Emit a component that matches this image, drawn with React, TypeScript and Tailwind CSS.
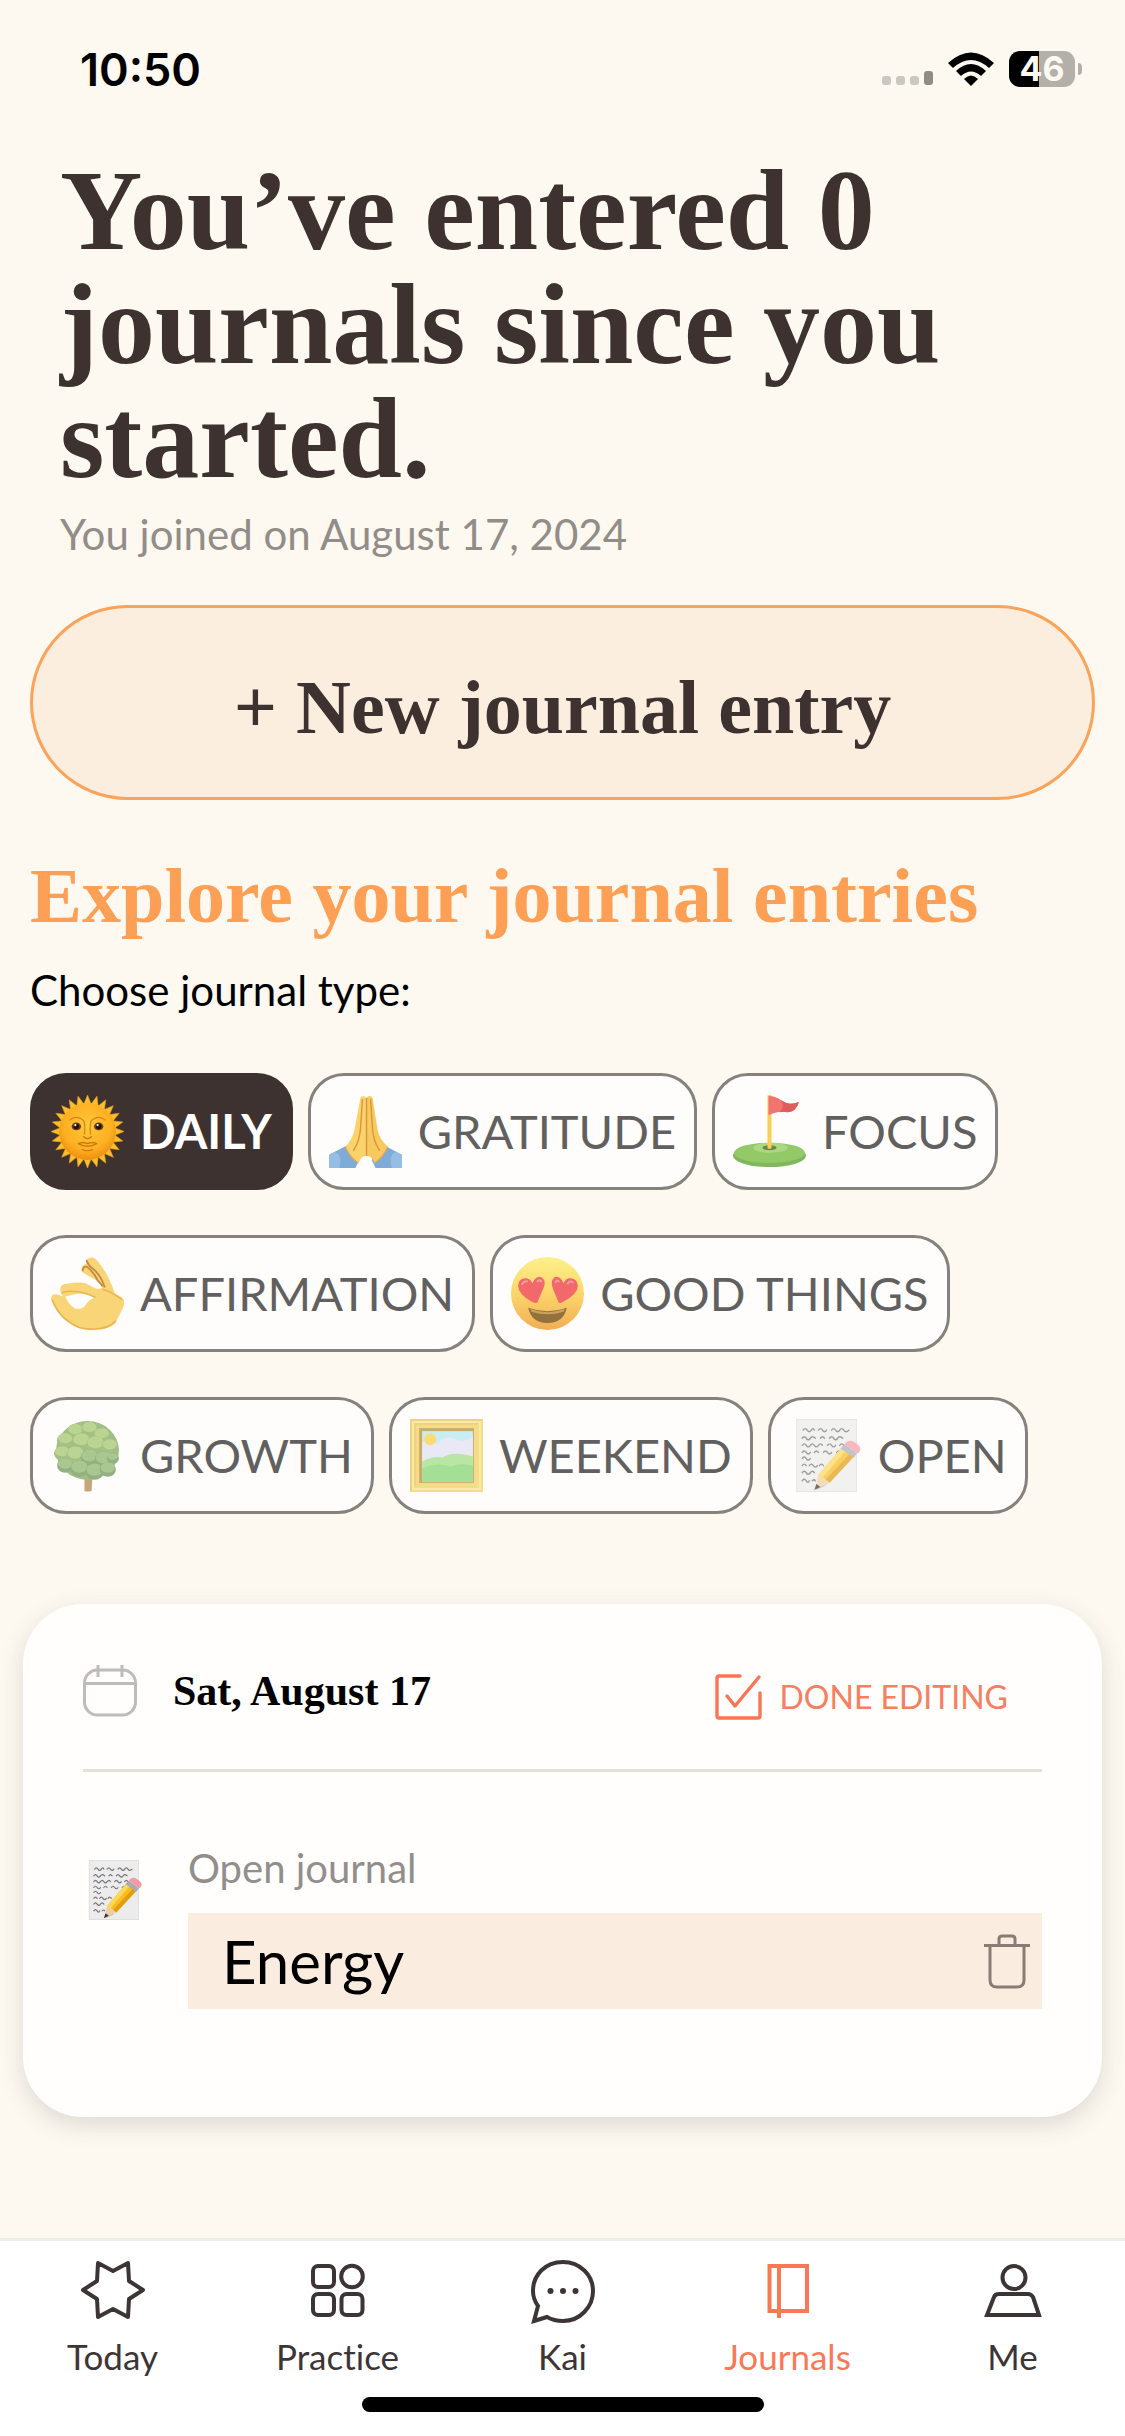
import React from "react";

const SERIF = "font-['Liberation_Serif',serif]";
const SANS = "font-['Lato',sans-serif]";

type IconProps = { className?: string };

function Sun({ className }: IconProps) {
  return (
    <svg viewBox="0 0 72 72" className={className} aria-hidden="true">
      <defs>
        <radialGradient id="sunFace" cx="0.5" cy="0.4" r="0.6">
          <stop offset="0" stopColor="#ffc83a" />
          <stop offset="0.7" stopColor="#fdb022" />
          <stop offset="1" stopColor="#ee8d10" />
        </radialGradient>
      </defs>
      {Array.from({ length: 24 }, (_, i) => (
        <path key={i} d="M32 10 L36 0 L40 10Z" fill="#fcc02c" stroke="#e79a1c" strokeWidth="0.6" transform={`rotate(${i * 15} 36 36)`} />
      ))}
      <circle cx="36" cy="36" r="28" fill="url(#sunFace)" />
      <path d="M18 25 Q25 19 32 25 Q34 28 33 39 M54 25 Q47 19 40 25 Q38 28 39 39" fill="none" stroke="#d98412" strokeWidth="1.2" />
      <ellipse cx="25" cy="31" rx="4.6" ry="3.8" fill="#6b3a18" />
      <ellipse cx="47" cy="31" rx="4.6" ry="3.8" fill="#6b3a18" />
      <circle cx="25" cy="31" r="2.6" fill="#221210" />
      <circle cx="47" cy="31" r="2.6" fill="#221210" />
      <circle cx="24" cy="29.6" r="1.1" fill="#fff" />
      <circle cx="46" cy="29.6" r="1.1" fill="#fff" />
      <path d="M32 41 Q36 45 40 41 M27 48 Q36 53 45 48 M27 48 Q31 46 36 48 Q41 46 45 48 M31 54 Q36 56 41 54" fill="none" stroke="#c9700f" strokeWidth="1.2" strokeLinecap="round" />
    </svg>
  );
}

function Hands({ className }: IconProps) {
  return (
    <svg viewBox="0 0 72 72" className={className} aria-hidden="true">
      <path d="M0 59 L17 50 L30 64 L26 72 H0Z" fill="#7fabd9" />
      <path d="M72 59 L55 50 L42 64 L46 72 H72Z" fill="#7fabd9" />
      <path d="M0 59 L6 56 Q14 60 10 72 H0Z M72 59 L66 56 Q58 60 62 72 H72Z" fill="#96bde4" />
      <path d="M37 3 V60 Q32 60 29 67 Q21 62 16 51 Q23 44 25 35 L31 3 Q34 -1 37 3Z" fill="#fbd36d" />
      <path d="M37 3 V60 Q42 60 45 67 Q53 62 58 51 Q50 44 48 35 L43 3 Q40 -1 37 3Z" fill="#f8c95f" />
      <path d="M37 3 V60 M33 4 L31 34 Q30 46 24 55 M41 4 L43 34 Q44 46 50 55" fill="none" stroke="#d9963c" strokeWidth="1.4" />
      <path d="M16 51 Q21 62 29 67 M58 51 Q53 62 45 67" fill="none" stroke="#e0a850" strokeWidth="1.2" />
    </svg>
  );
}

function Golf({ className }: IconProps) {
  return (
    <svg viewBox="0 0 72 72" className={className} aria-hidden="true">
      <ellipse cx="36" cy="60" rx="36" ry="11" fill="#7fb85c" />
      <ellipse cx="36" cy="57" rx="35" ry="10" fill="#94c968" />
      <ellipse cx="37" cy="52" rx="17" ry="5" fill="#add883" />
      <ellipse cx="36" cy="52" rx="7" ry="2.4" fill="#6b8748" />
      <rect x="34" y="0" width="4" height="53" rx="1" fill="#f9cf5c" />
      <path d="M35 1 Q42 1 47 5 Q56 11 65 7 Q62 17 54 17 Q44 15 35 20Z" fill="#f27470" />
      <path d="M47 5 Q54 11 65 7 Q62 17 54 17 Q50 16 46 17 Q52 11 47 5Z" fill="#e05b5d" />
    </svg>
  );
}

function OkHand({ className }: IconProps) {
  return (
    <svg viewBox="0 0 72 72" className={className} aria-hidden="true">
      <path
        fillRule="evenodd"
        d="M35 3 Q39 -2 44 2 Q50 8 56 19 Q60 27 63 36 L70 40 Q74 44 71 50 L64 64 Q58 72 40 72 Q25 72 15 63 Q4 54 0 41 Q1 36 6 37 L12 39 L10 36 Q7 29 13 27 Q26 24 34 26 L44 31 Q50 32 51 29 L46 24 L31 15 Q28 8 35 7Z M14 39 Q18 48 24 51 Q32 52 35 46 Q39 41 44 40 Q36 36 27 36 Q19 38 14 39Z"
        fill="#fad577"
      />
      <path d="M31 14 Q32 8 36 10 Q43 16 46 23 L51 29 M35 3 Q36 8 43 13 Q50 20 53 30" fill="none" stroke="#c08b45" strokeWidth="1.8" />
      <path d="M1 42 Q7 57 18 64 Q28 72 42 71 Q57 71 64 63 M11 35 Q26 31 44 40 M51 32 Q60 34 70 42" fill="none" stroke="#e9b553" strokeWidth="1.6" />
    </svg>
  );
}

function HeartEyes({ className }: IconProps) {
  return (
    <svg viewBox="0 0 72 72" className={className} aria-hidden="true">
      <defs>
        <linearGradient id="loveFace" x1="0" y1="0" x2="0" y2="1">
          <stop offset="0" stopColor="#fdf08a" />
          <stop offset="0.5" stopColor="#fbd66b" />
          <stop offset="1" stopColor="#f1ad55" />
        </linearGradient>
      </defs>
      <circle cx="36" cy="36" r="36" fill="url(#loveFace)" />
      <path d="M17 50 Q36 57 55 50 Q52 65 36 65 Q20 65 17 50Z" fill="#94703c" />
      <path d="M19 51 Q36 58 53 51 L52 54 Q36 59 20 54Z" fill="#c7a35e" />
      <path d="M20 44 Q7 36 7 28 Q8 21 14 21 Q19 21 21 26 Q25 18 30 20 Q36 24 31 33 Q28 40 26 45 Q24 46 20 44Z" fill="#f2686b" />
      <path d="M52 44 Q66 36 66 28 Q65 21 58 21 Q54 21 52 26 Q48 18 43 20 Q38 24 42 33 Q45 40 47 45 Q49 46 52 44Z" fill="#f2686b" />
      <path d="M11 27 Q12 24 16 24 M26 24 Q28 22 30 24 M44 25 Q45 22 47 24 M56 26 Q58 23 61 25" fill="none" stroke="#fb9a96" strokeWidth="2" strokeLinecap="round" />
    </svg>
  );
}

const LEAVES = [
  [24, 10, 8], [38, 8, 8], [50, 14, 8], [14, 19, 8], [30, 20, 9], [44, 23, 9], [58, 25, 8], [11, 32, 8],
  [24, 33, 9], [38, 36, 9], [52, 38, 9], [61, 37, 6], [14, 44, 8], [28, 47, 9], [43, 50, 9], [56, 48, 8],
];

function Tree({ className }: IconProps) {
  return (
    <svg viewBox="0 0 72 72" className={className} aria-hidden="true">
      <path d="M33 54 H41 L40 71 Q36 72 33 71Z" fill="#c5a67a" />
      <ellipse cx="36" cy="31" rx="31" ry="29" fill="#a1be87" />
      {LEAVES.map(([x, y, r], i) => (
        <g key={i}>
          <ellipse cx={x} cy={y + 2} rx={r} ry={r - 1} fill={y > 35 ? "#93b080" : "#a3c183"} />
          <ellipse cx={x} cy={y} rx={r - 1} ry={r - 3} fill={y > 35 ? "#a9c791" : "#bbd492"} />
        </g>
      ))}
    </svg>
  );
}

function Frame({ className }: IconProps) {
  return (
    <svg viewBox="0 0 72 72" className={className} aria-hidden="true">
      <rect width="72" height="72" fill="#f4dc88" />
      <path d="M0 0 H72 L66 6 H6Z M0 0 L6 6 V66 L0 72Z" fill="#eed27c" />
      <rect x="3" y="3" width="66" height="66" fill="none" stroke="#f9eaa9" strokeWidth="2" />
      <rect x="9" y="9" width="54" height="54" fill="#c9ab6c" />
      <rect x="12" y="12" width="50" height="50" fill="#c9edf5" />
      <path d="M12 23 Q20 17 27 25 Q35 14 44 20 Q53 24 62 17 V44 H12Z" fill="#e8e9f4" />
      <circle cx="20" cy="20" r="6" fill="#fbdb75" />
      <path d="M12 42 Q22 36 32 38 Q42 31 62 37 V62 H12Z" fill="#b9e6a4" />
      <path d="M12 49 Q28 42 40 47 Q50 43 62 46 V62 H12Z" fill="#a4df96" />
    </svg>
  );
}

function Memo({ className }: IconProps) {
  return (
    <svg viewBox="-3 0 72 72" className={className} aria-hidden="true">
      <rect x="4" y="0" width="60" height="72" fill="#dedddd" />
      <rect x="5" y="1" width="58" height="70" fill="#ececec" />
      <path
        d="M11 11 q2 -3 4 0 t4 0 t3 0 M26 11 q2 -3 4 0 t4 0 M39 11 q2 -3 4 0 t4 0 t4 0 t5 0 M10 19 q2 -3 4 0 t4 0 t5 0 M28 19 q2 -3 4 0 M37 19 q2 -3 4 0 t4 0 t5 0 M10 26 q2 -3 4 0 t4 0 t4 0 t4 0 t4 0 M35 26 q2 -3 4 0 t4 0 M47 26 q2 -3 4 0 M10 33 q2 -3 4 0 t4 0 M22 33 q2 -3 4 0 M31 33 q2 -3 4 0 t4 0 M44 33 q2 -3 4 0 M10 39 q2 -3 4 0 t4 0 M10 46 q2 -3 4 0 M17 46 q2 -3 4 0 t4 0 M27 46 q2 -3 4 0 M10 53 q2 -3 4 0 t4 0 t4 0 M10 61 q2 -3 4 0 t3 0 M20 61 q2 -2 3 0"
        fill="none"
        stroke="#77757a"
        strokeWidth="1.4"
        strokeLinecap="round"
      />
      <path d="M24 70 L26 56 L34 65Z" fill="#7d7060" opacity="0.4" />
      <path d="M26 55 L50 27 L62 36 L37 63Z" fill="#f8bd1f" />
      <path d="M26 55 L50 27 L54 30 L30 58Z" fill="#fdd75a" />
      <path d="M33 60 L58 33 L62 36 L37 63Z" fill="#e29d12" />
      <path d="M26 55 L37 63 L23 69Z" fill="#efcf9d" />
      <path d="M24 64 L28 67 L22 70Z" fill="#3b3434" />
      <path d="M48 29 L52 25 L64 34 L61 38Z" fill="#a8acb8" />
      <path d="M52 25 Q55 20 60 22 Q69 27 67 31 Q66 34 64 34Z" fill="#f39aa7" />
    </svg>
  );
}

const ENTRY_TYPES = [
  [
    { label: "DAILY", Icon: Sun, tone: "opacity-100", active: true },
    { label: "GRATITUDE", Icon: Hands, tone: "opacity-100" },
    { label: "FOCUS", Icon: Golf, tone: "opacity-100" },
  ],
  [
    { label: "AFFIRMATION", Icon: OkHand, tone: "opacity-100" },
    { label: "GOOD THINGS", Icon: HeartEyes, tone: "opacity-100" },
  ],
  [
    { label: "GROWTH", Icon: Tree, tone: "opacity-100" },
    { label: "WEEKEND", Icon: Frame, tone: "opacity-100" },
    { label: "OPEN", Icon: Memo, tone: "opacity-70" },
  ],
];

function StatusBar() {
  return (
    <header className="flex h-[138px] items-center justify-between pr-[43px] pl-20">
      <time className="font-['Inter',sans-serif] text-[45px] leading-none font-semibold text-black">10:50</time>
      <div className="flex items-center gap-[15px]">
        <svg viewBox="0 0 51 34" className="h-[34px] w-[51px]" aria-label="Signal">
          <rect x="0" y="24" width="9" height="9" rx="3" fill="#cbc8c1" />
          <rect x="14" y="24" width="9" height="9" rx="3" fill="#cbc8c1" />
          <rect x="28" y="24" width="9" height="9" rx="3" fill="#cbc8c1" />
          <rect x="42" y="19" width="9" height="14" rx="3" fill="#908d88" />
        </svg>
        <svg viewBox="0 0 46 34" className="h-[34px] w-[46px]" aria-label="Wi-Fi">
          <path d="M0 11 Q23 -10 46 11 L41 16 Q23 0 5 16Z" />
          <path d="M8 19 Q23 5 38 19 L33 24 Q23 15 13 24Z" />
          <path d="M16 27 Q23 20 30 27 L23 34Z" />
        </svg>
        <div className="flex items-center gap-[3px]">
          <div className="flex h-9 w-[66px] items-center justify-center rounded-[11px] bg-linear-to-r from-black from-45% to-[#b3b0aa] to-45% font-['Inter',sans-serif] text-[34px] leading-none font-bold text-[#fdf9f1]">
            46
          </div>
          <div className="h-3 w-1 rounded-r-full bg-[#b3b0aa]" />
        </div>
      </div>
    </header>
  );
}

function JournalTypes() {
  return (
    <div className="mt-[53px] flex flex-col gap-[45px] px-[30px]">
      {ENTRY_TYPES.map((row, i) => (
        <div key={i} className="flex gap-[15px]">
          {row.map(({ label, Icon, tone, active }) => (
            <button
              key={label}
              type="button"
              aria-pressed={!!active}
              className={
                "flex h-[117px] items-center gap-4 rounded-[36px] border-3 px-[18px] text-[47px] leading-none " +
                (active ? "border-[#3d3230] bg-[#3d3230] font-bold text-white" : "border-[#86817d] bg-[#fefdfb] text-[#62605f]")
              }
            >
              <Icon className={"size-[73px] shrink-0 " + tone} />
              <span className="whitespace-nowrap">{label}</span>
            </button>
          ))}
        </div>
      ))}
    </div>
  );
}

function EntryCard() {
  return (
    <section className="mx-[23px] mt-[90px] rounded-[60px] bg-[#fffefc] px-[60px] pb-[108px] shadow-[0_8px_24px_rgba(61,50,48,0.16)]">
      <div className="flex h-[168px] items-center justify-between border-b-3 border-[#e3e2d9] pt-2 pr-[34px]">
        <div className="flex items-center gap-9">
          <svg viewBox="0 0 54 52" className="h-[52px] w-[54px]" fill="none" stroke="#bfbbb7" strokeWidth="3" aria-hidden="true">
            <rect x="1.5" y="5" width="51" height="45" rx="13" />
            <path d="M2 18.5 H52 M15 0 V12 M39 0 V12" />
          </svg>
          <h3 className={SERIF + " text-[42px] leading-none font-bold text-black"}>Sat, August 17</h3>
        </div>
        <button type="button" className="mt-3 flex items-center gap-[18px] text-[32px] leading-none text-[#f5805f]">
          <svg viewBox="0 0 47 46" className="h-[46px] w-[47px]" fill="none" stroke="#fb7554" strokeWidth="3.4" aria-hidden="true">
            <path d="M25 2 H4 Q2 2 2 4 V42 Q2 44 4 44 H43 Q45 44 45 42 V19" strokeLinecap="round" />
            <path d="M12 22 L20 32 L44 3" strokeLinecap="round" strokeLinejoin="round" />
          </svg>
          DONE EDITING
        </button>
      </div>
      <div className="flex pt-[68px]">
        <Memo className="mt-5 size-[60px] shrink-0" />
        <div className="ml-[45px] min-w-0 flex-1">
          <label htmlFor="entry" className="mb-4 block text-[40px] leading-[57px] text-[#918e8c]">
            Open journal
          </label>
          <div className="flex h-24 items-center justify-between bg-[#faeddf] pr-3 pl-[34px]">
            <input id="entry" defaultValue="Energy" className="h-24 min-w-0 flex-1 bg-transparent text-[60px] leading-none text-black outline-none" />
            <button type="button" aria-label="Delete entry">
              <svg viewBox="0 0 46 55" className="h-[55px] w-[46px]" fill="none" stroke="#8b7b74" strokeWidth="3" aria-hidden="true">
                <path d="M0 11.5 H46 M15 11 V5 Q15 2 18 2 H28 Q31 2 31 5 V11 M6 12 V46 Q6 53 13 53 H33 Q40 53 40 46 V12" />
              </svg>
            </button>
          </div>
        </div>
      </div>
    </section>
  );
}

const TABS = [
  {
    label: "Today",
    icon: <path d="M18 3 L33 11 L48 3 L49 21 L63 30 L49 39 L48 57 L33 49 L18 57 L17 39 L3 30 L17 21Z" strokeLinejoin="round" />,
  },
  {
    label: "Practice",
    icon: (
      <>
        <rect x="8" y="6" width="21" height="21" rx="5" />
        <circle cx="47" cy="16.5" r="10.8" />
        <rect x="8" y="34" width="21" height="21" rx="5" />
        <rect x="36.5" y="34" width="21" height="21" rx="5" />
      </>
    ),
  },
  {
    label: "Kai",
    icon: (
      <>
        <path d="M4 61 L17 57 Q24 61 33 61 C50 61 63 47 63 31 C63 15 50 2 33 2 C15 2 3 15 3 31 Q3 39 8 46Z" />
        <g fill="currentColor" stroke="none">
          <circle cx="20.5" cy="31" r="3" />
          <circle cx="33" cy="31" r="3" />
          <circle cx="45.5" cy="31" r="3" />
        </g>
      </>
    ),
  },
  { label: "Journals", icon: <path d="M14.5 6 H52 V51 H14.5Z M24 6 V58" />, active: true },
  {
    label: "Me",
    icon: (
      <>
        <circle cx="34" cy="17.5" r="11.5" />
        <path d="M7 55 L14 37 Q15 34 19 34 H48 Q51 34 53 37 L59 55Z" />
      </>
    ),
  },
];

function TabBar() {
  return (
    <footer className="mt-auto border-t-3 border-[#eeedea] bg-white pb-6">
      <nav className="grid grid-cols-5 pt-[19px]">
        {TABS.map(({ label, icon, active }) => (
          <a
            key={label}
            href="#"
            aria-current={active ? "page" : undefined}
            className={
              "flex flex-col items-center gap-2 text-[35px] leading-[48px] [font-variant-ligatures:none] " +
              (active ? "text-[#fb7857]" : "text-[#3d3535]")
            }
          >
            <svg viewBox="0 0 66 64" className="h-16 w-[66px]" fill="none" stroke="currentColor" strokeWidth="4" aria-hidden="true">
              {icon}
            </svg>
            {label}
          </a>
        ))}
      </nav>
      <div className="mx-auto mt-[17px] h-[15px] w-[402px] rounded-full bg-black" />
    </footer>
  );
}

export default function App() {
  return (
    <div className={SANS + " flex min-h-screen flex-col bg-[#fdf9f1]"}>
      <StatusBar />
      <main>
        <div className="px-[60px] pt-4">
          <h1 className={SERIF + " text-[114px] leading-[114px] font-bold text-[#3d3230]"}>You’ve entered 0 journals since you started.</h1>
          <p className="mt-1 text-[42px] leading-[69px] text-[#928d88]">You joined on August 17, 2024</p>
        </div>
        <div className="px-[30px] pt-9">
          <button type="button" className={SERIF + " h-[195px] w-full rounded-full border-3 border-[#f9a35b] bg-[#fbeede] pt-2 text-[76px] font-bold text-[#3d3230]"}>
            + New journal entry
          </button>
          <h2 className={SERIF + " mt-12 text-[78px] leading-[96px] font-bold text-[#fd9f54]"}>Explore your journal entries</h2>
          <p className="mt-4 text-[42px] leading-[60px] text-black">Choose journal type:</p>
        </div>
        <JournalTypes />
        <EntryCard />
      </main>
      <TabBar />
    </div>
  );
}
